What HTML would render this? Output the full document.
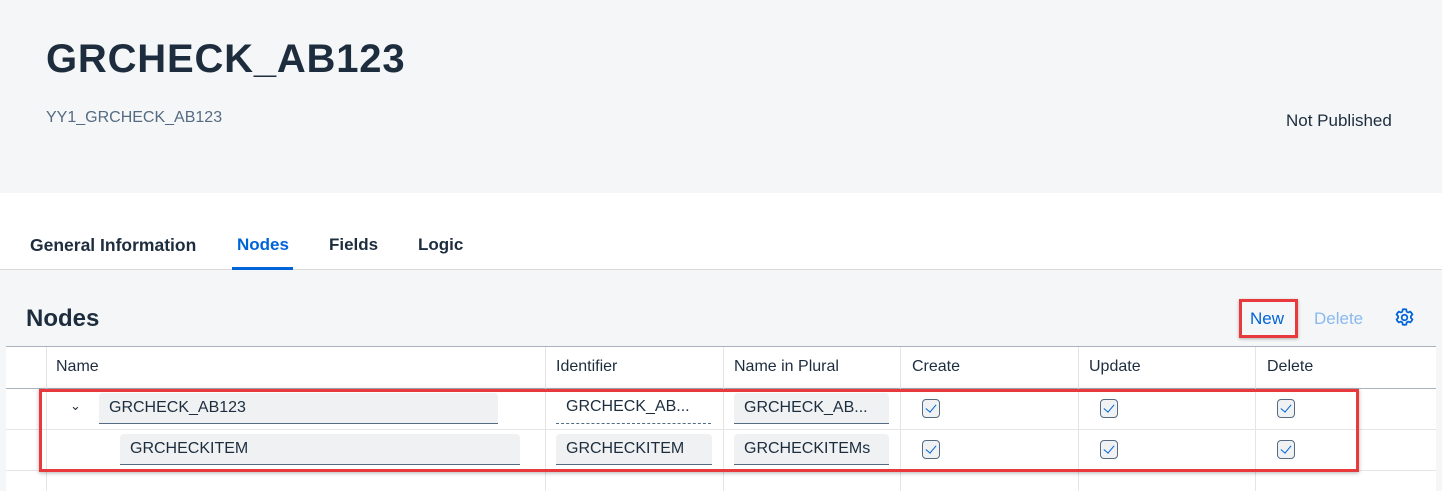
<!DOCTYPE html>
<html><head><style>
*{margin:0;padding:0;box-sizing:border-box}
body{width:1442px;height:491px;overflow:hidden;background:#f5f6f7;font-family:"Liberation Sans",sans-serif;color:#1d2d3e;position:relative}
.a{position:absolute}
.inp{position:absolute;background:#eff1f2;border-bottom:1px solid #556b82;border-radius:4px 4px 0 0;font-size:16px;padding-left:10px;line-height:30px;height:31px;color:#1d2d3e}
.cb{position:absolute;width:18px;height:19px;border:1px solid #556b82;border-radius:4px;background:#eff1f2}
.cb:after{content:"";position:absolute;left:5px;top:2px;width:5px;height:9px;border:solid #0064d9;border-width:0 1.2px 1.2px 0;transform:rotate(40deg)}
.vl{position:absolute;top:347px;height:144px;width:1px;background:#e5e5e5}
.hl{position:absolute;left:6px;width:1430px;height:1px;background:#e5e5e5}
.th{position:absolute;top:358px;font-size:16px;color:#1d2d3e}
</style></head><body>
<div class="a" style="left:46px;top:37px;font-size:40px;font-weight:bold;letter-spacing:0.8px">GRCHECK_AB123</div>
<div class="a" style="left:46px;top:109px;font-size:16px;color:#556b82">YY1_GRCHECK_AB123</div>
<div class="a" style="left:1286px;top:111px;font-size:17px">Not Published</div>
<div class="a" style="left:0;top:193px;width:1442px;height:77px;background:#fff;border-bottom:1px solid #d9d9d9"></div>
<div class="a" style="left:30px;top:235px;font-size:17.5px;font-weight:bold">General Information</div>
<div class="a" style="left:237px;top:235px;font-size:17px;font-weight:bold;color:#0064d9">Nodes</div>
<div class="a" style="left:232px;top:267px;width:61px;height:3px;background:#0064d9"></div>
<div class="a" style="left:329px;top:235px;font-size:17px;font-weight:bold">Fields</div>
<div class="a" style="left:418px;top:235px;font-size:17px;font-weight:bold">Logic</div>
<div class="a" style="left:26px;top:305px;font-size:24px;font-weight:bold">Nodes</div>
<div class="a" style="left:1250px;top:309px;font-size:17px;color:#0064d9">New</div>
<div class="a" style="left:1239px;top:299px;width:59px;height:39px;border:3px solid #e8393c;box-shadow:0 1px 3px rgba(0,0,0,.3)"></div>
<div class="a" style="left:1314px;top:309px;font-size:17px;color:#89b9ef">Delete</div>
<svg class="a" style="left:1394px;top:307px" width="21" height="21" viewBox="0 0 24 24" fill="none" stroke="#0064d9" stroke-width="2"><circle cx="12" cy="12" r="3.2"/><path d="M12 2.5l2 .3.5 2.5 1.6.9 2.4-.9 1.5 1.5 1 1.8-1.7 1.9v1.9l1.7 1.9-1 1.8-1.5 1.5-2.4-.9-1.6.9-.5 2.5-2 .3-2-.3-.5-2.5-1.6-.9-2.4.9-1.5-1.5-1-1.8 1.7-1.9v-1.9L3 8.6l1-1.8 1.5-1.5 2.4.9 1.6-.9.5-2.5z"/></svg>
<div class="a" style="left:6px;top:346px;width:1430px;height:145px;background:#fff;border-top:1px solid #a8b2bd"></div>
<div class="hl" style="top:388px;background:#a8b2bd"></div>
<div class="hl" style="top:429px"></div>
<div class="hl" style="top:470px"></div>
<div class="vl" style="left:46px"></div><div class="vl" style="left:545px"></div><div class="vl" style="left:723px"></div><div class="vl" style="left:900px"></div><div class="vl" style="left:1078px"></div><div class="vl" style="left:1255px"></div>
<div class="th" style="left:56px">Name</div><div class="th" style="left:556px">Identifier</div><div class="th" style="left:734px">Name in Plural</div><div class="th" style="left:912px">Create</div><div class="th" style="left:1089px">Update</div><div class="th" style="left:1267px">Delete</div>
<div class="a" style="left:70px;top:398px;font-size:13px">⌄</div>
<div class="inp" style="left:99px;top:393px;width:399px">GRCHECK_AB123</div>
<div class="a" style="left:556px;top:398px;font-size:16px;width:155px;padding-left:10px;height:26px;border-bottom:1px dashed #556b82">GRCHECK_AB...</div>
<div class="inp" style="left:734px;top:393px;width:155px">GRCHECK_AB...</div>
<div class="inp" style="left:120px;top:434px;width:400px">GRCHECKITEM</div>
<div class="inp" style="left:556px;top:434px;width:156px">GRCHECKITEM</div>
<div class="inp" style="left:734px;top:434px;width:155px">GRCHECKITEMs</div>
<div class="cb" style="left:922px;top:399px"></div><div class="cb" style="left:1100px;top:399px"></div><div class="cb" style="left:1277px;top:399px"></div>
<div class="cb" style="left:922px;top:440px"></div><div class="cb" style="left:1100px;top:440px"></div><div class="cb" style="left:1277px;top:440px"></div>
<div class="a" style="left:39px;top:389px;width:1320px;height:83px;border:3px solid #e8393c;box-shadow:0 1px 4px rgba(0,0,0,.3)"></div>
</body></html>
